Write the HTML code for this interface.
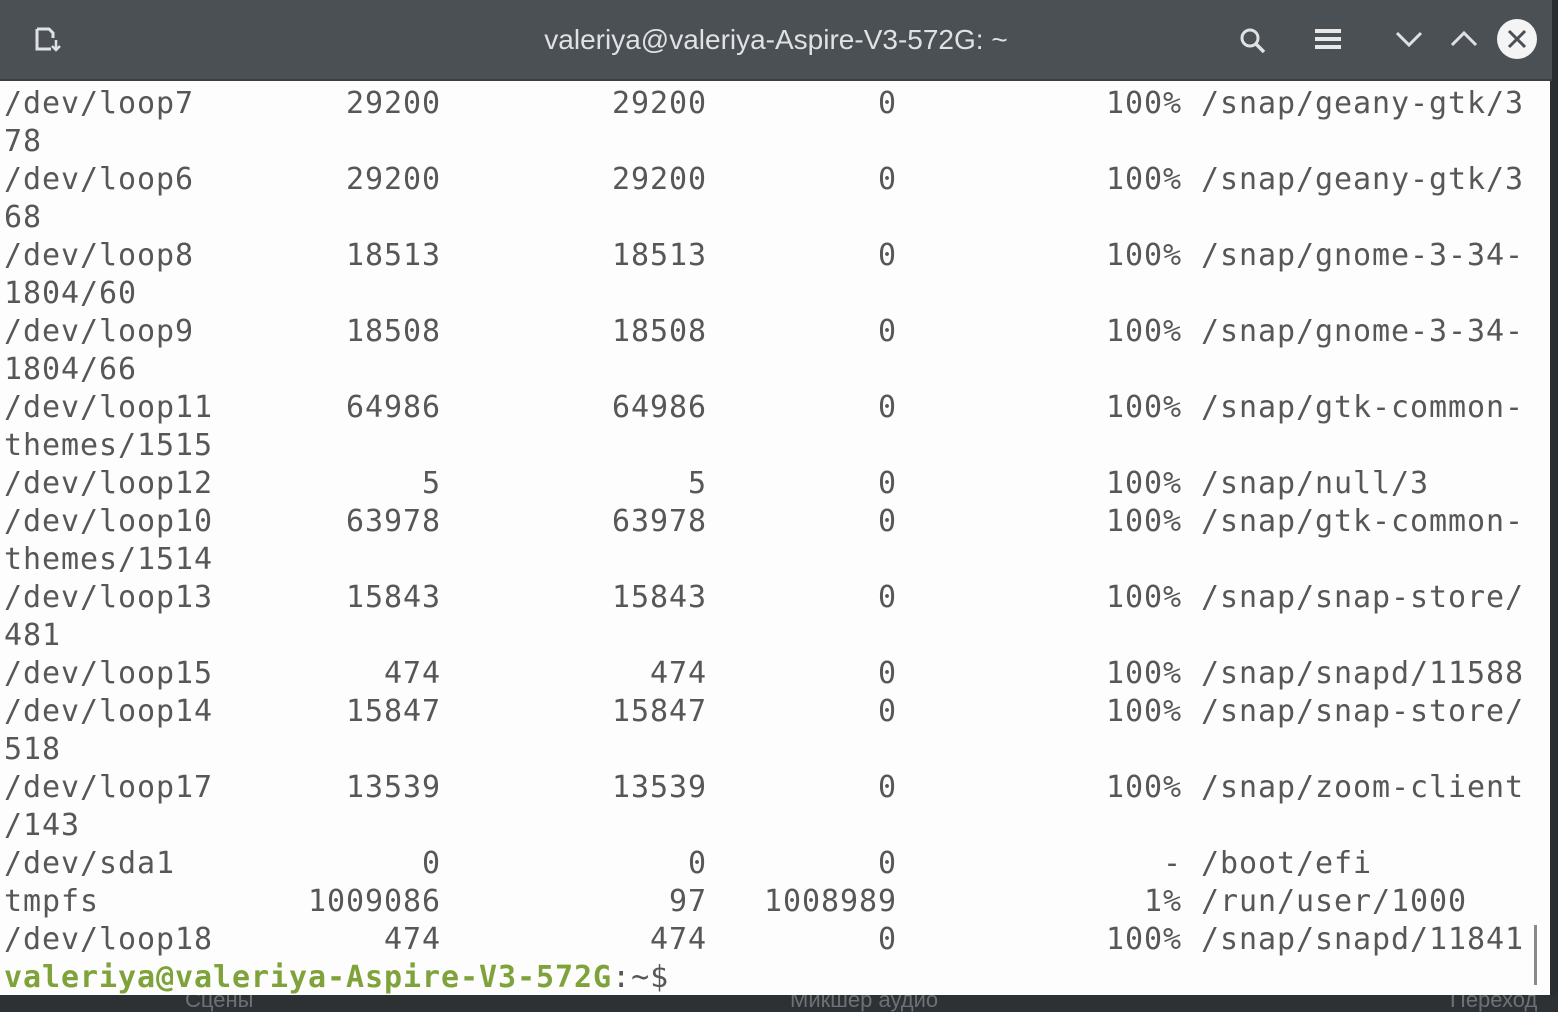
<!DOCTYPE html>
<html><head><meta charset="utf-8"><style>
body{margin:0;width:1558px;height:1012px;overflow:hidden;background:#2b2e31;position:relative}
.tb{position:absolute;left:0;top:0;width:1552px;height:79px;background:#4b5055;border-bottom:2px solid #3a3e42}
.title{position:absolute;left:0;right:0;top:24px;text-align:center;color:#dfe1e3;font:28px "Liberation Sans",sans-serif}
.body{position:absolute;left:0;top:81px;width:1550px;height:914px;background:#fdfdfd;overflow:hidden}
.rows{position:absolute;left:4px;top:4px;font-family:"DejaVu Sans Mono","Liberation Mono",monospace;font-size:30px;letter-spacing:0.94px;color:#575757}
.r{height:38px;line-height:38px;white-space:pre;overflow:hidden}
.c1{display:inline-block;width:437px;text-align:right;position:relative;vertical-align:top}
.c1 b{position:absolute;left:0;font-weight:normal}
.c2{display:inline-block;width:266px;text-align:right;vertical-align:top}
.c3{display:inline-block;width:190px;text-align:right;vertical-align:top}
.c4{display:inline-block;width:285px;text-align:right;vertical-align:top}
.g{color:#7fa33a;font-weight:bold}
.bot{position:absolute;left:0;top:995px;width:1558px;height:17px;background:#2e3134;color:#6d7175;font:22px "Liberation Sans",sans-serif;overflow:hidden}
</style></head><body>
<div class="tb">
<svg style="position:absolute;left:34px;top:26px" width="30" height="28" viewBox="0 0 30 28"><path d="M3 3h12l4 4v5M3 3v20h14" fill="none" stroke="#dfe1e3" stroke-width="3"/><path d="M22 14v10M18 20l4 4 4-4" fill="none" stroke="#dfe1e3" stroke-width="2.5"/></svg>
<div class="title">valeriya@valeriya-Aspire-V3-572G: ~</div>
<svg style="position:absolute;left:1238px;top:26px" width="30" height="30"><circle cx="12" cy="12" r="8" fill="none" stroke="#dfe1e3" stroke-width="3"/><path d="M18 18l8 8" stroke="#dfe1e3" stroke-width="3.5"/></svg>
<svg style="position:absolute;left:1314px;top:27px" width="28" height="24"><path d="M1 4h26M1 12h26M1 20h26" stroke="#e8e8e8" stroke-width="4"/></svg>
<svg style="position:absolute;left:1395px;top:30px" width="28" height="18"><path d="M2 3l12 12 12-12" fill="none" stroke="#dfe1e3" stroke-width="3"/></svg>
<svg style="position:absolute;left:1450px;top:30px" width="28" height="18"><path d="M2 15l12-12 12 12" fill="none" stroke="#dfe1e3" stroke-width="3"/></svg>
<svg style="position:absolute;left:1497px;top:19px" width="40" height="40"><circle cx="20" cy="20" r="20" fill="#f4f4f4"/><path d="M12 12l16 16M28 12l-16 16" stroke="#4b5055" stroke-width="3"/></svg>
</div>
<div class="body">
<div class="rows">
<div class="r"><span class="c1"><b>/dev/loop7</b>29200</span><span class="c2">29200</span><span class="c3">0</span><span class="c4">100%</span> /snap/geany-gtk/3</div>
<div class="r">78</div>
<div class="r"><span class="c1"><b>/dev/loop6</b>29200</span><span class="c2">29200</span><span class="c3">0</span><span class="c4">100%</span> /snap/geany-gtk/3</div>
<div class="r">68</div>
<div class="r"><span class="c1"><b>/dev/loop8</b>18513</span><span class="c2">18513</span><span class="c3">0</span><span class="c4">100%</span> /snap/gnome-3-34-</div>
<div class="r">1804/60</div>
<div class="r"><span class="c1"><b>/dev/loop9</b>18508</span><span class="c2">18508</span><span class="c3">0</span><span class="c4">100%</span> /snap/gnome-3-34-</div>
<div class="r">1804/66</div>
<div class="r"><span class="c1"><b>/dev/loop11</b>64986</span><span class="c2">64986</span><span class="c3">0</span><span class="c4">100%</span> /snap/gtk-common-</div>
<div class="r">themes/1515</div>
<div class="r"><span class="c1"><b>/dev/loop12</b>5</span><span class="c2">5</span><span class="c3">0</span><span class="c4">100%</span> /snap/null/3</div>
<div class="r"><span class="c1"><b>/dev/loop10</b>63978</span><span class="c2">63978</span><span class="c3">0</span><span class="c4">100%</span> /snap/gtk-common-</div>
<div class="r">themes/1514</div>
<div class="r"><span class="c1"><b>/dev/loop13</b>15843</span><span class="c2">15843</span><span class="c3">0</span><span class="c4">100%</span> /snap/snap-store/</div>
<div class="r">481</div>
<div class="r"><span class="c1"><b>/dev/loop15</b>474</span><span class="c2">474</span><span class="c3">0</span><span class="c4">100%</span> /snap/snapd/11588</div>
<div class="r"><span class="c1"><b>/dev/loop14</b>15847</span><span class="c2">15847</span><span class="c3">0</span><span class="c4">100%</span> /snap/snap-store/</div>
<div class="r">518</div>
<div class="r"><span class="c1"><b>/dev/loop17</b>13539</span><span class="c2">13539</span><span class="c3">0</span><span class="c4">100%</span> /snap/zoom-client</div>
<div class="r">/143</div>
<div class="r"><span class="c1"><b>/dev/sda1</b>0</span><span class="c2">0</span><span class="c3">0</span><span class="c4">-</span> /boot/efi</div>
<div class="r"><span class="c1"><b>tmpfs</b>1009086</span><span class="c2">97</span><span class="c3">1008989</span><span class="c4">1%</span> /run/user/1000</div>
<div class="r"><span class="c1"><b>/dev/loop18</b>474</span><span class="c2">474</span><span class="c3">0</span><span class="c4">100%</span> /snap/snapd/11841</div>
<div class="r"><span class="g">valeriya@valeriya-Aspire-V3-572G</span>:~$</div>
</div>
<div style="position:absolute;left:1534px;top:844px;width:3px;height:60px;background:#8a8a8a"></div>
</div>
<div class="bot"><span style="position:absolute;left:185px;top:-8px">Сцены</span><span style="position:absolute;left:790px;top:-8px">Микшер аудио</span><span style="position:absolute;left:1450px;top:-8px">Переход</span></div>
</body></html>
